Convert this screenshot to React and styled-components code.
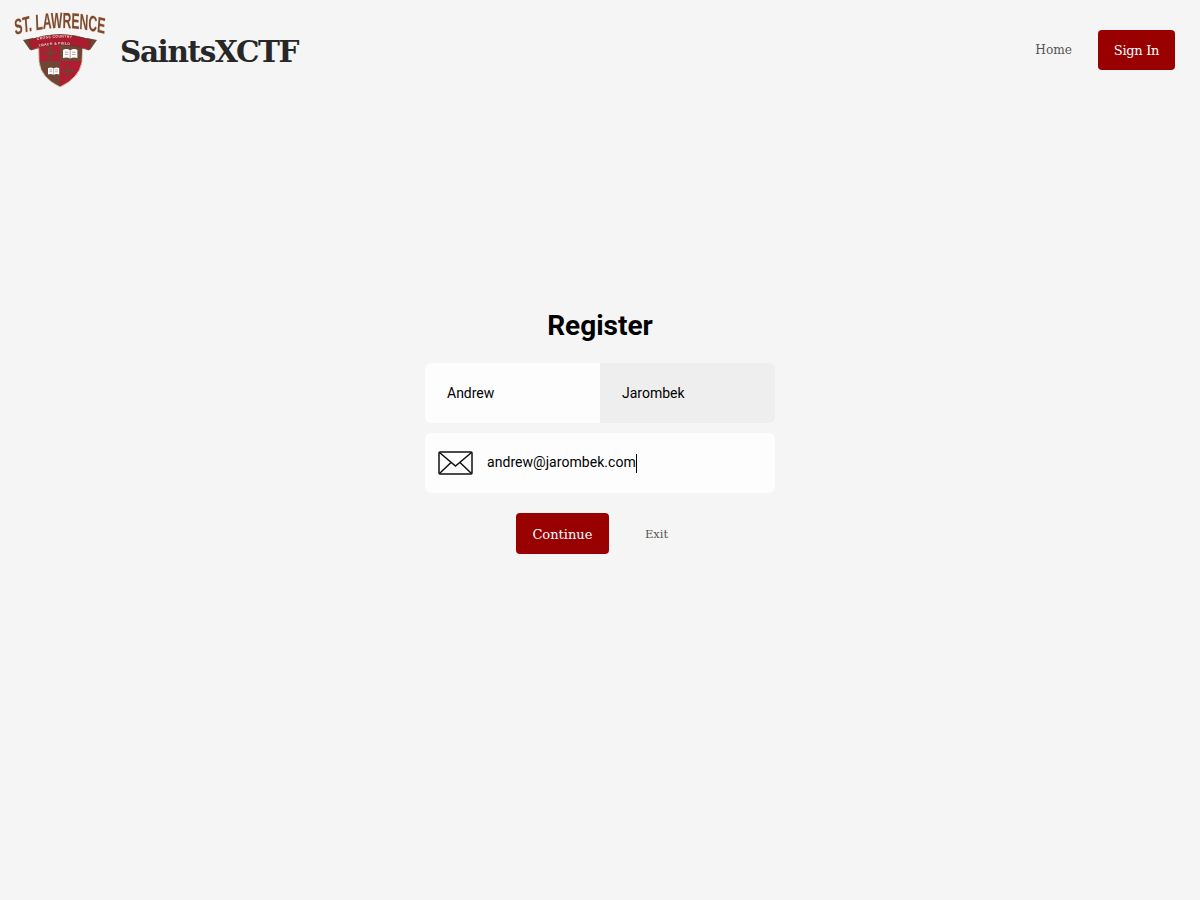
import React from 'react';
import styled, { createGlobalStyle } from 'styled-components';

const Global = createGlobalStyle`
  html, body { margin: 0; padding: 0; background: #f5f5f5; }
  * { box-sizing: border-box; }
`;
const SLAB = `"DejaVu Serif", "Liberation Serif", serif`;
const SANS = `Roboto, "Liberation Sans", sans-serif`;

const Page = styled.div`
  width: 1200px; height: 900px; background: #f5f5f5; display: flex; flex-direction: column;
`;
const Header = styled.header`
  height: 100px; display: flex; align-items: center; padding: 0 25px 0 15px;
`;
const Brand = styled.div`
  display: flex; align-items: center; gap: 15px; flex: 1;
`;
const LogoArt = styled.svg`
  display: block; overflow: visible; flex: none;
`;
const Title = styled.h1`
  margin: 2px 0 0; font: 700 29.5px ${SLAB}; letter-spacing: -1.4px; color: #272727;
`;
const Nav = styled.nav`
  display: flex; align-items: center; gap: 26px;
`;
const NavLink = styled.a`
  font: 400 12.2px ${SLAB}; color: #555;
`;
const Primary = styled.button`
  border: 0; border-radius: 4px; background: #990000; color: #fff;
  font: 400 13px ${SLAB}; padding: ${p => p.$h % 2}px 0 0; height: ${p => p.$h}px; width: ${p => p.$w}px;
  letter-spacing: ${p => (p.$tight ? '-0.3px' : '0')};
`;
const Main = styled.main`
  display: flex; flex-direction: column; align-items: center; padding-top: 208px;
`;
const Heading = styled.h2`
  margin: 0; height: 36px; font: 700 28px/36px ${SANS}; color: #000;
`;
const Form = styled.form`
  width: 350px; margin-top: 19px; display: flex; flex-direction: column; gap: 10px;
`;
const Pair = styled.div`
  display: flex; border-radius: 6px; overflow: hidden;
`;
const Field = styled.div`
  flex: 1; height: 60px; display: flex; align-items: center; padding-left: 22px;
  background: ${p => (p.$muted ? '#eeeeee' : '#fdfdfd')};
  font: 400 14px ${SANS}; color: #000;
`;
const IconField = styled.div`
  height: 60px; display: flex; align-items: center; gap: 14px; padding-left: 13px;
  border-radius: 6px; background: #fdfdfd; font: 400 14px ${SANS}; letter-spacing: 0.05px; color: #000;
`;
const Caret = styled.span`
  display: inline-block; width: 1px; height: 19px; background: #000; vertical-align: middle;
`;
const Actions = styled.div`
  margin-top: 10px; display: flex; align-items: center; justify-content: center; gap: 36px; padding-right: 16px;
`;
const ExitLink = styled.a`
  font: 400 11.5px ${SLAB}; color: #555;
`;

const Mail = () => (
  <svg width="35" height="24" viewBox="0 0 35 24" fill="none" stroke="#111" strokeWidth="1.5">
    <rect x="1" y="1" width="33" height="22" rx="1" />
    <path d="M1.5 1.5 L17.5 15 L33.5 1.5" />
    <path d="M1.5 22.5 L13 11.5 M33.5 22.5 L22 11.5" />
  </svg>
);

const Book = ({ x, y, s }) => (
  <g transform={`translate(${x} ${y}) scale(${s})`}>
    <path d="M0 1 Q4 -1 8 1.5 Q12 -1 16 1 L16 10 Q12 8.5 8 10.5 Q4 8.5 0 10 Z" fill="#fff" />
    <path d="M8 1.5V10.5M2 3.5h4M2 6h4M10 3.5h4M10 6h4" stroke="#8a6a5a" strokeWidth="0.7" fill="none" />
  </g>
);

const Cross = ({ x, y, s }) => (
  <g transform={`translate(${x} ${y}) scale(${s})`} fill="#6f3f32">
    <path d="M-1.3 -6 L-2.4 -8 H2.4 L1.3 -6 V-1.3 H6 L8 -2.4 V2.4 L6 1.3 H1.3 V6 L2.4 8 H-2.4 L-1.3 6 V1.3 H-6 L-8 2.4 V-2.4 L-6 -1.3 H-1.3 Z" />
  </g>
);

const SHIELD = 'M23.5 30 Q45 24 68 30 L67 50 Q64 66 45 75 Q26 66 24 50 Z';

const Logo = () => (
  <LogoArt width="90" height="76" viewBox="0 0 90 76">
    <defs>
      <path id="arc" d="M0 23 Q85 9 170 23" />
      <path id="band" d="M19 29 Q45 22 71 29" />
      <path id="band2" d="M20 36 Q45 29 70 36" />
      <clipPath id="shield"><path d={SHIELD} /></clipPath>
      <filter id="soft"><feGaussianBlur stdDeviation="0.25" /></filter>
    </defs>
    <g filter="url(#soft)">
      <g transform="scale(0.55 1)">
        <text fontFamily='"Liberation Sans", sans-serif' fontWeight="700" fontSize="22" fill="#7b4a35" stroke="#f0dcc4" strokeWidth="1" paintOrder="stroke">
          <textPath href="#arc">ST. LAWRENCE</textPath>
        </text>
      </g>
      <g clipPath="url(#shield)">
        <rect x="20" y="24" width="50" height="53" fill="#6f4535" />
        <rect x="23" y="28" width="22" height="21" fill="#b01f30" />
        <rect x="45" y="49" width="23" height="27" fill="#b01f30" />
        <Cross x={35} y={41} s={0.9} />
        <Cross x={53} y={59} s={0.75} />
        <Book x={48} y={37} s={0.9} />
        <Book x={33} y={55.5} s={0.7} />
      </g>
      <path d={SHIELD} fill="none" stroke="#ead2b8" strokeWidth="0.8" />
      <path d="M8 28 L18 26 L20 34 L15 38 Z M82 28 L72 26 L70 34 L75 38 Z" fill="#6f4535" />
      <path d="M14 28 Q45 17 76 28 L74 38 Q45 27 16 38 Z" fill="#a81c2e" stroke="#5e3a2c" strokeWidth="0.8" />
      <text fontFamily='"Liberation Sans", sans-serif' fontWeight="700" fontSize="3.5" fill="#f5d8d8" letterSpacing="0.35">
        <textPath href="#band" startOffset="6%">CROSS COUNTRY</textPath>
      </text>
      <text fontFamily='"Liberation Sans", sans-serif' fontWeight="700" fontSize="3.5" fill="#f5d8d8" letterSpacing="0.35">
        <textPath href="#band2" startOffset="8%">TRACK &amp; FIELD</textPath>
      </text>
    </g>
  </LogoArt>
);

export default function App() {
  return (
    <Page>
      <Global />
      <Header>
        <Brand>
          <Logo />
          <Title>SaintsXCTF</Title>
        </Brand>
        <Nav>
          <NavLink>Home</NavLink>
          <Primary type="button" $w={77} $h={40} $tight>Sign In</Primary>
        </Nav>
      </Header>
      <Main>
        <Heading>Register</Heading>
        <Form>
          <Pair>
            <Field>Andrew</Field>
            <Field $muted>Jarombek</Field>
          </Pair>
          <IconField>
            <Mail />
            <span>andrew@jarombek.com<Caret /></span>
          </IconField>
          <Actions>
            <Primary type="button" $w={93} $h={41}>Continue</Primary>
            <ExitLink>Exit</ExitLink>
          </Actions>
        </Form>
      </Main>
    </Page>
  );
}
